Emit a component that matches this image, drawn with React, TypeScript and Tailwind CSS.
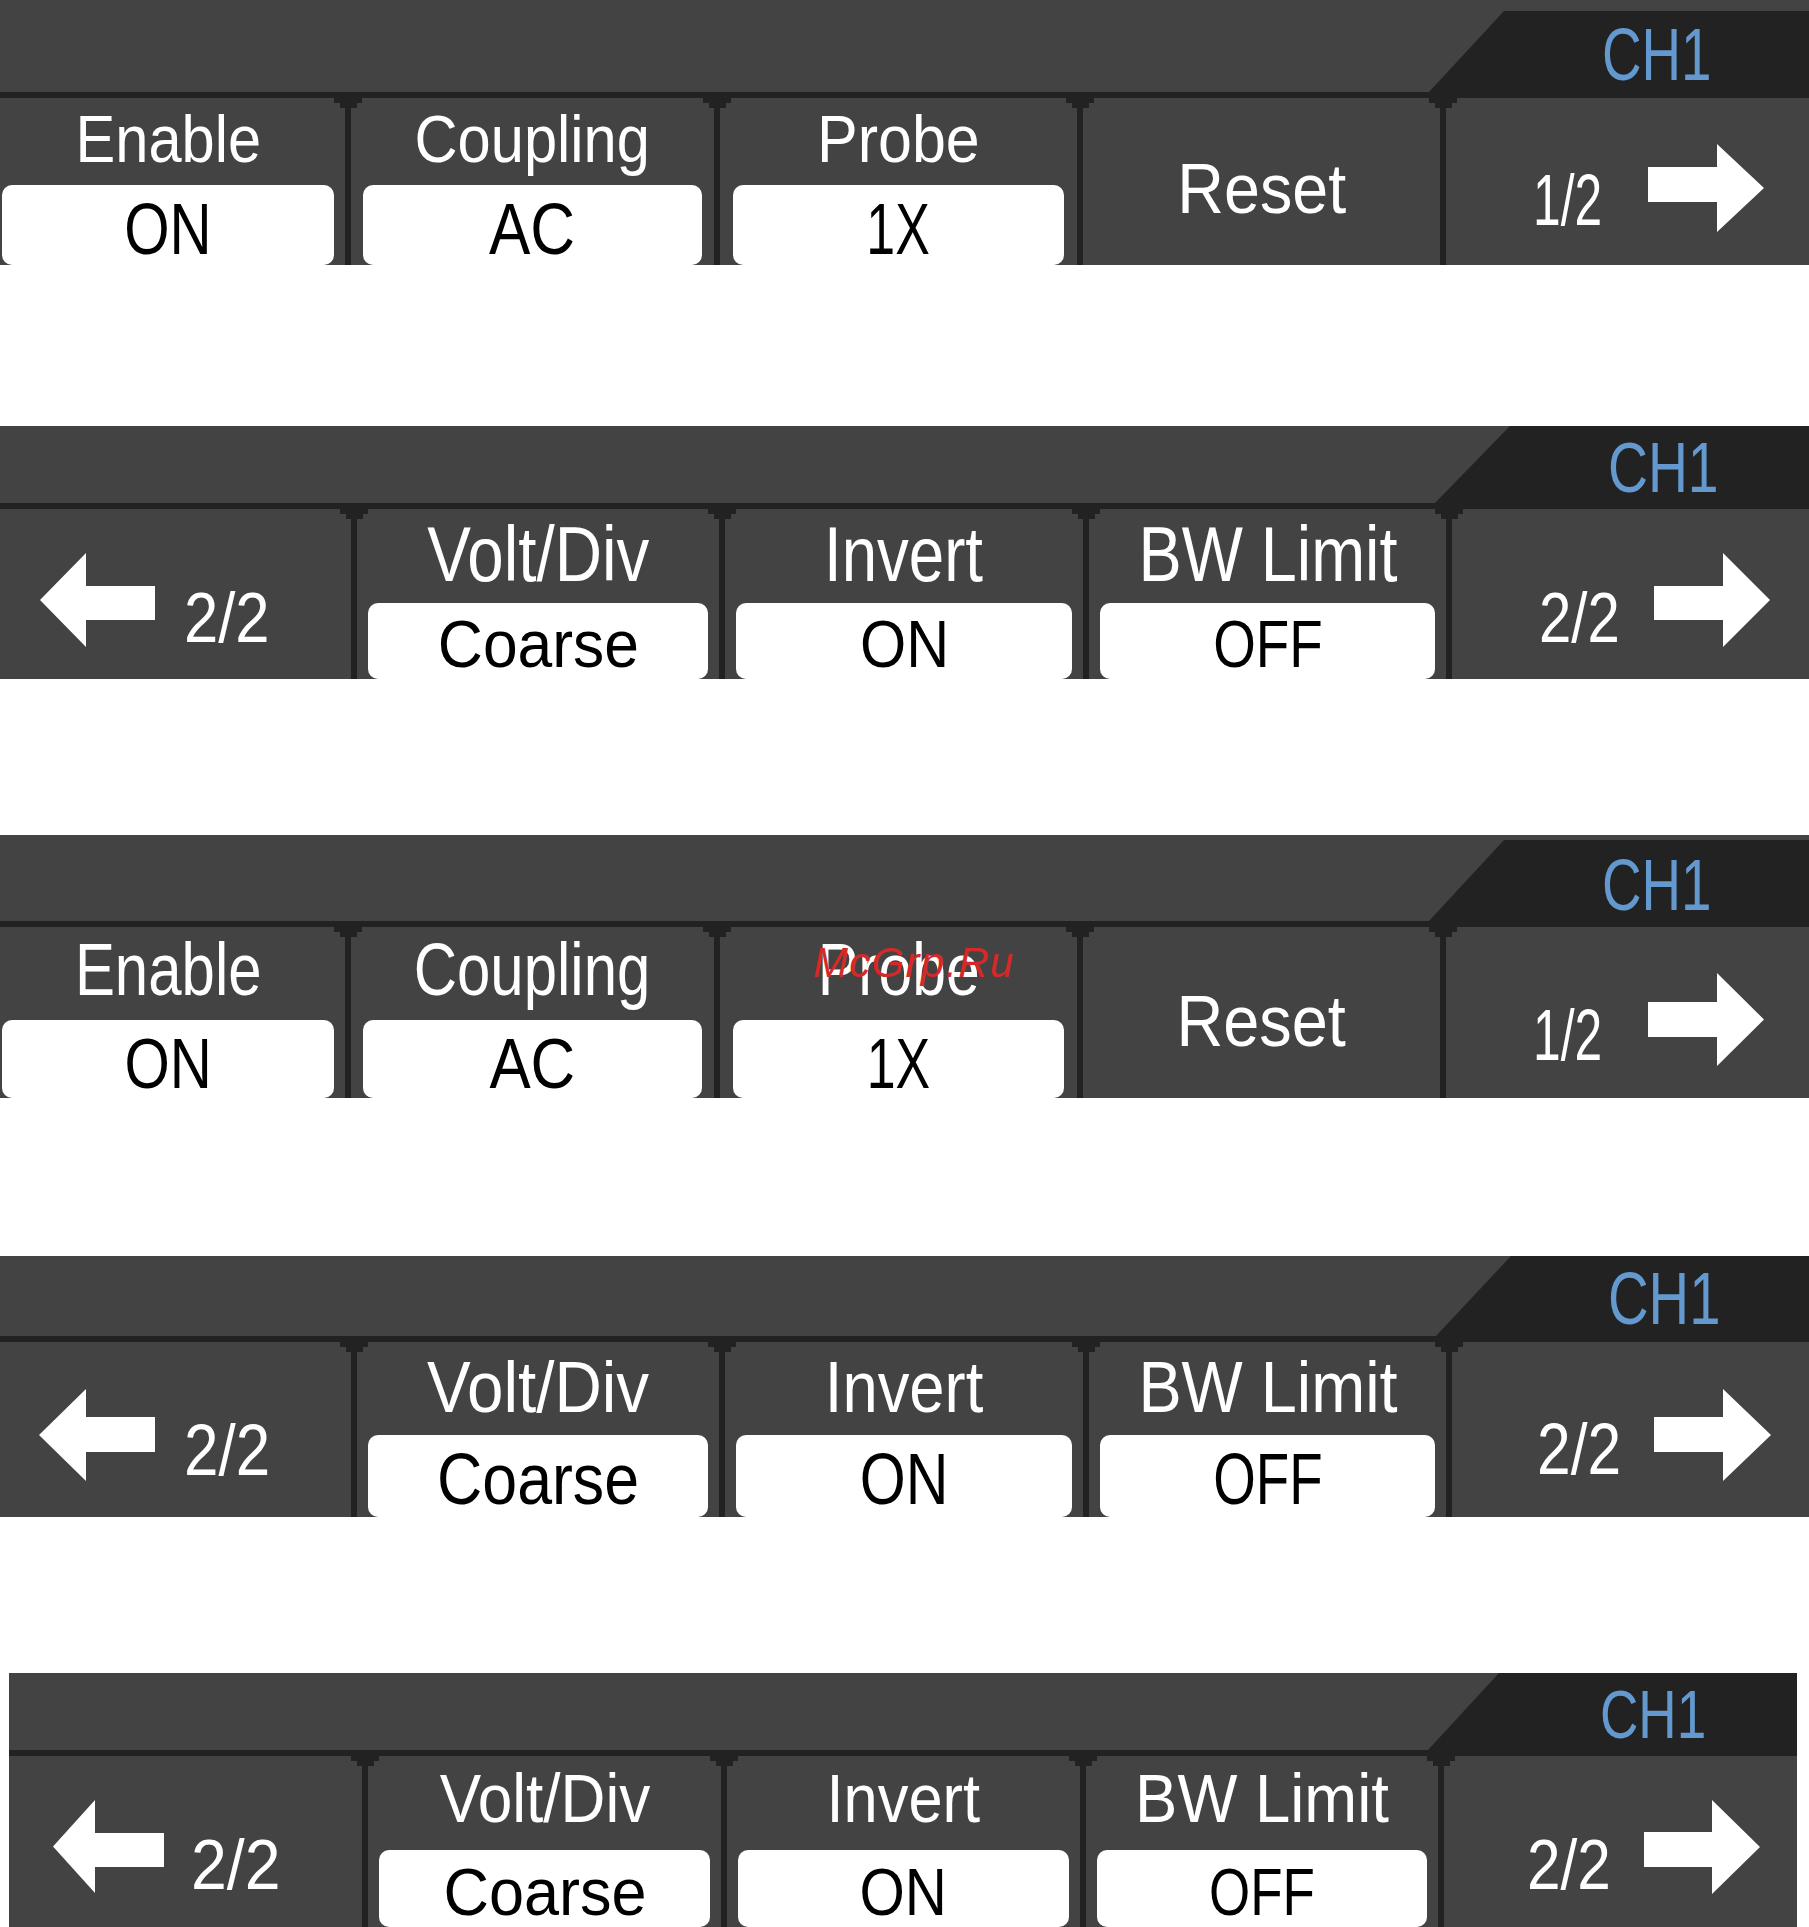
import type { ReactNode } from "react";

// one channel menu strip (oscilloscope soft-key bar)
type PanelProps = {
  className: string;
  topCls: string;
  tabCls: string;
  chCls: string;
  rowCls: string;
  overlay?: ReactNode;
  children: ReactNode;
};

function Panel({ className, topCls, tabCls, chCls, rowCls, overlay, children }: PanelProps) {
  return (
    <section className={`relative flex flex-col bg-[#434343] ${className}`}>
      <div className={`flex justify-end ${topCls}`}>
        <div className={`flex items-start bg-[#222222] ${tabCls}`}>
          <span className={`block origin-left whitespace-nowrap leading-none text-[#6399cf] ${chCls}`}>
            CH1
          </span>
        </div>
      </div>
      <div className="h-[6px] bg-[#222222]" />
      <div className={`flex ${rowCls}`}>{children}</div>
      {overlay}
    </section>
  );
}

function Divider() {
  return (
    <div className="relative w-[6px] shrink-0 bg-[#222222]">
      <svg
        width="28"
        height="10"
        viewBox="0 0 28 10"
        className="absolute left-[-11px] top-0"
        shapeRendering="crispEdges"
      >
        <path d="M0 0H28V5H22.5V10H5.5V5H0Z" fill="#222222" />
      </svg>
    </div>
  );
}

type ArrowSpec = { w: number; h: number; top: number; bottom: number; shaft: number };

function Arrow({ spec, left }: { spec: ArrowSpec; left?: boolean }) {
  const { w, h, top, bottom, shaft } = spec;
  const d = left
    ? `M${w} ${top}H${w - shaft}V0L0 ${h / 2}L${w - shaft} ${h}V${bottom}H${w}Z`
    : `M0 ${top}H${shaft}V0L${w} ${h / 2}L${shaft} ${h}V${bottom}H0Z`;
  return (
    <svg width={w} height={h} viewBox={`0 0 ${w} ${h}`} className="block shrink-0">
      <path d={d} fill="#ffffff" />
    </svg>
  );
}

type LabelButtonProps = {
  w: string;
  pad: string;
  label: string;
  value: string;
  labelCls: string;
  pillCls: string;
  valueCls: string;
};

function LabelButton({ w, pad, label, value, labelCls, pillCls, valueCls }: LabelButtonProps) {
  return (
    <div className={`flex shrink-0 flex-col ${w} ${pad}`}>
      <div className="flex justify-center">
        <span className={`block whitespace-nowrap leading-none text-white ${labelCls}`}>{label}</span>
      </div>
      <div className={`mt-auto flex justify-center rounded-[10px] bg-white ${pillCls}`}>
        <span className={`block whitespace-nowrap leading-none text-black ${valueCls}`}>{value}</span>
      </div>
    </div>
  );
}

function TextButton({ w, text, cls }: { w: string; text: string; cls: string }) {
  return (
    <div className={`flex shrink-0 justify-center ${w}`}>
      <span className={`block whitespace-nowrap leading-none text-white ${cls}`}>{text}</span>
    </div>
  );
}

function NextButton({
  cls,
  textW,
  textCls,
  page,
  arrowMt,
  arrow,
}: {
  cls: string;
  textW: string;
  textCls: string;
  page: string;
  arrowMt: string;
  arrow: ArrowSpec;
}) {
  return (
    <div className={`flex items-start ${cls}`}>
      <div className={`shrink-0 ${textW}`}>
        <span className={`block origin-left whitespace-nowrap leading-none text-white ${textCls}`}>{page}</span>
      </div>
      <div className={arrowMt}>
        <Arrow spec={arrow} />
      </div>
    </div>
  );
}

function PrevButton({
  cls,
  arrowMt,
  arrow,
  textCls,
  page,
}: {
  cls: string;
  arrowMt: string;
  arrow: ArrowSpec;
  textCls: string;
  page: string;
}) {
  return (
    <div className={`flex shrink-0 items-start ${cls}`}>
      <div className={arrowMt}>
        <Arrow spec={arrow} left />
      </div>
      <span className={`block origin-left whitespace-nowrap leading-none text-white ${textCls}`}>{page}</span>
    </div>
  );
}

function PageOne({ second }: { second?: boolean }) {
  // panels 1 and 3 are the same menu, cropped a little differently
  if (!second) {
    return (
      <Panel
        className="w-full"
        topCls="h-[92px]"
        tabCls="mt-[11px] w-[380px] [clip-path:polygon(75px_0,100%_0,100%_100%,0_100%)]"
        chCls="ml-[173px] mt-[7px] text-[74px] scale-x-[0.74]"
        rowCls="h-[167px]"
      >
        <LabelButton
          w="w-[345px]"
          pad="pl-[2px] pr-[11px]"
          label="Enable"
          value="ON"
          labelCls="mt-[7px] text-[67px] scale-x-[0.89]"
          pillCls="h-[80px]"
          valueCls="mt-[8px] text-[72px] scale-x-[0.81]"
        />
        <Divider />
        <LabelButton
          w="w-[363px]"
          pad="px-[12px]"
          label="Coupling"
          value="AC"
          labelCls="mt-[7px] text-[67px] scale-x-[0.89]"
          pillCls="h-[80px]"
          valueCls="mt-[8px] text-[72px] scale-x-[0.86]"
        />
        <Divider />
        <LabelButton
          w="w-[357px]"
          pad="px-[13px]"
          label="Probe"
          value="1X"
          labelCls="mt-[7px] text-[67px] scale-x-[0.91]"
          pillCls="h-[80px]"
          valueCls="mt-[8px] text-[72px] scale-x-[0.72]"
        />
        <Divider />
        <TextButton w="w-[357px]" text="Reset" cls="mt-[55px] text-[71px] scale-x-[0.91]" />
        <Divider />
        <NextButton
          cls="flex-1 pl-[87px]"
          textW="w-[115px]"
          textCls="mt-[66px] text-[72px] scale-x-[0.69]"
          page="1/2"
          arrowMt="mt-[46px]"
          arrow={{ w: 116, h: 88, top: 23, bottom: 58, shaft: 69 }}
        />
      </Panel>
    );
  }
  return (
    <Panel
      className="mt-[156px] w-full"
      topCls="h-[86px]"
      tabCls="mt-[5px] w-[380px] [clip-path:polygon(75px_0,100%_0,100%_100%,0_100%)]"
      chCls="ml-[173px] mt-[8px] text-[73px] scale-x-[0.75]"
      rowCls="h-[171px]"
      overlay={
        <span className="absolute left-[813px] top-[107px] whitespace-nowrap text-[42px] italic leading-none tracking-[0.03em] text-[#d62828]">
          McGrp.Ru
        </span>
      }
    >
      <LabelButton
        w="w-[345px]"
        pad="pl-[2px] pr-[11px]"
        label="Enable"
        value="ON"
        labelCls="mt-[6px] text-[74px] scale-x-[0.81]"
        pillCls="h-[78px]"
        valueCls="mt-[8px] text-[71px] scale-x-[0.82]"
      />
      <Divider />
      <LabelButton
        w="w-[363px]"
        pad="px-[12px]"
        label="Coupling"
        value="AC"
        labelCls="mt-[6px] text-[74px] scale-x-[0.81]"
        pillCls="h-[78px]"
        valueCls="mt-[8px] text-[71px] scale-x-[0.87]"
      />
      <Divider />
      <LabelButton
        w="w-[357px]"
        pad="px-[13px]"
        label="Probe"
        value="1X"
        labelCls="mt-[6px] text-[74px] scale-x-[0.82]"
        pillCls="h-[78px]"
        valueCls="mt-[8px] text-[71px] scale-x-[0.73]"
      />
      <Divider />
      <TextButton w="w-[357px]" text="Reset" cls="mt-[58px] text-[72px] scale-x-[0.9]" />
      <Divider />
      <NextButton
        cls="flex-1 pl-[87px]"
        textW="w-[115px]"
        textCls="mt-[72px] text-[72px] scale-x-[0.69]"
        page="1/2"
        arrowMt="mt-[46px]"
        arrow={{ w: 116, h: 93, top: 29, bottom: 64, shaft: 69 }}
      />
    </Panel>
  );
}

export default function App() {
  return (
    <div className="flex min-h-screen w-[1809px] flex-col bg-white font-['Liberation_Sans',Arial,sans-serif]">
      <PageOne />

      <Panel
        className="mt-[161px] w-full"
        topCls="h-[77px]"
        tabCls="w-[374px] [clip-path:polygon(75px_0,100%_0,100%_100%,0_100%)]"
        chCls="ml-[173px] mt-[7px] text-[70px] scale-x-[0.79]"
        rowCls="h-[170px]"
      >
        <PrevButton
          cls="w-[351px] pl-[40px]"
          arrowMt="mt-[44px]"
          arrow={{ w: 115, h: 94, top: 33, bottom: 67, shaft: 69 }}
          textCls="ml-[29px] mt-[74px] text-[70px] scale-x-[0.88]"
          page="2/2"
        />
        <Divider />
        <LabelButton
          w="w-[362px]"
          pad="px-[11px]"
          label="Volt/Div"
          value="Coarse"
          labelCls="mt-[6px] text-[78px] scale-x-[0.84]"
          pillCls="h-[76px]"
          valueCls="mt-[8px] text-[66px] scale-x-[0.945]"
        />
        <Divider />
        <LabelButton
          w="w-[358px]"
          pad="px-[11px]"
          label="Invert"
          value="ON"
          labelCls="mt-[6px] text-[78px] scale-x-[0.815]"
          pillCls="h-[76px]"
          valueCls="mt-[8px] text-[66px] scale-x-[0.9]"
        />
        <Divider />
        <LabelButton
          w="w-[357px]"
          pad="px-[11px]"
          label="BW Limit"
          value="OFF"
          labelCls="mt-[6px] text-[78px] scale-x-[0.83]"
          pillCls="h-[76px]"
          valueCls="mt-[8px] text-[66px] scale-x-[0.83]"
        />
        <Divider />
        <NextButton
          cls="flex-1 pl-[87px]"
          textW="w-[115px]"
          textCls="mt-[74px] text-[70px] scale-x-[0.83]"
          page="2/2"
          arrowMt="mt-[44px]"
          arrow={{ w: 116, h: 94, top: 33, bottom: 67, shaft: 69 }}
        />
      </Panel>

      <PageOne second />

      <Panel
        className="mt-[158px] w-full"
        topCls="h-[80px]"
        tabCls="w-[373px] [clip-path:polygon(75px_0,100%_0,100%_100%,0_100%)]"
        chCls="ml-[172px] mt-[6px] text-[74px] scale-x-[0.76]"
        rowCls="h-[175px]"
      >
        <PrevButton
          cls="w-[351px] pl-[39px]"
          arrowMt="mt-[47px]"
          arrow={{ w: 116, h: 92, top: 28, bottom: 63, shaft: 69 }}
          textCls="ml-[29px] mt-[72px] text-[72px] scale-x-[0.86]"
          page="2/2"
        />
        <Divider />
        <LabelButton
          w="w-[362px]"
          pad="px-[11px]"
          label="Volt/Div"
          value="Coarse"
          labelCls="mt-[9px] text-[72px] scale-x-[0.91]"
          pillCls="h-[82px]"
          valueCls="mt-[8px] text-[72px] scale-x-[0.87]"
        />
        <Divider />
        <LabelButton
          w="w-[358px]"
          pad="px-[11px]"
          label="Invert"
          value="ON"
          labelCls="mt-[9px] text-[72px] scale-x-[0.88]"
          pillCls="h-[82px]"
          valueCls="mt-[8px] text-[72px] scale-x-[0.82]"
        />
        <Divider />
        <LabelButton
          w="w-[357px]"
          pad="px-[11px]"
          label="BW Limit"
          value="OFF"
          labelCls="mt-[9px] text-[72px] scale-x-[0.9]"
          pillCls="h-[82px]"
          valueCls="mt-[8px] text-[72px] scale-x-[0.76]"
        />
        <Divider />
        <NextButton
          cls="flex-1 pl-[85px]"
          textW="w-[117px]"
          textCls="mt-[71px] text-[72px] scale-x-[0.84]"
          page="2/2"
          arrowMt="mt-[47px]"
          arrow={{ w: 117, h: 92, top: 28, bottom: 63, shaft: 69 }}
        />
      </Panel>

      <Panel
        className="ml-[9px] mr-[12px] mt-[156px]"
        topCls="h-[77px]"
        tabCls="w-[369px] [clip-path:polygon(71px_0,100%_0,100%_100%,0_100%)]"
        chCls="ml-[172px] mt-[7px] text-[69px] scale-x-[0.77]"
        rowCls="h-[171px]"
      >
        <PrevButton
          cls="w-[353px] pl-[44px]"
          arrowMt="mt-[44px]"
          arrow={{ w: 111, h: 93, top: 33, bottom: 67, shaft: 69 }}
          textCls="ml-[27px] mt-[74px] text-[70px] scale-x-[0.92]"
          page="2/2"
        />
        <Divider />
        <LabelButton
          w="w-[353px]"
          pad="px-[11px]"
          label="Volt/Div"
          value="Coarse"
          labelCls="mt-[8px] text-[69px] scale-x-[0.9]"
          pillCls="h-[77px]"
          valueCls="mt-[8px] text-[67px] scale-x-[0.94]"
        />
        <Divider />
        <LabelButton
          w="w-[353px]"
          pad="px-[11px]"
          label="Invert"
          value="ON"
          labelCls="mt-[8px] text-[69px] scale-x-[0.89]"
          pillCls="h-[77px]"
          valueCls="mt-[8px] text-[67px] scale-x-[0.87]"
        />
        <Divider />
        <LabelButton
          w="w-[352px]"
          pad="px-[11px]"
          label="BW Limit"
          value="OFF"
          labelCls="mt-[8px] text-[69px] scale-x-[0.92]"
          pillCls="h-[77px]"
          valueCls="mt-[8px] text-[67px] scale-x-[0.79]"
        />
        <Divider />
        <NextButton
          cls="flex-1 pl-[83px]"
          textW="w-[117px]"
          textCls="mt-[73px] text-[71px] scale-x-[0.85]"
          page="2/2"
          arrowMt="mt-[44px]"
          arrow={{ w: 116, h: 94, top: 32, bottom: 67, shaft: 68 }}
        />
      </Panel>
    </div>
  );
}
